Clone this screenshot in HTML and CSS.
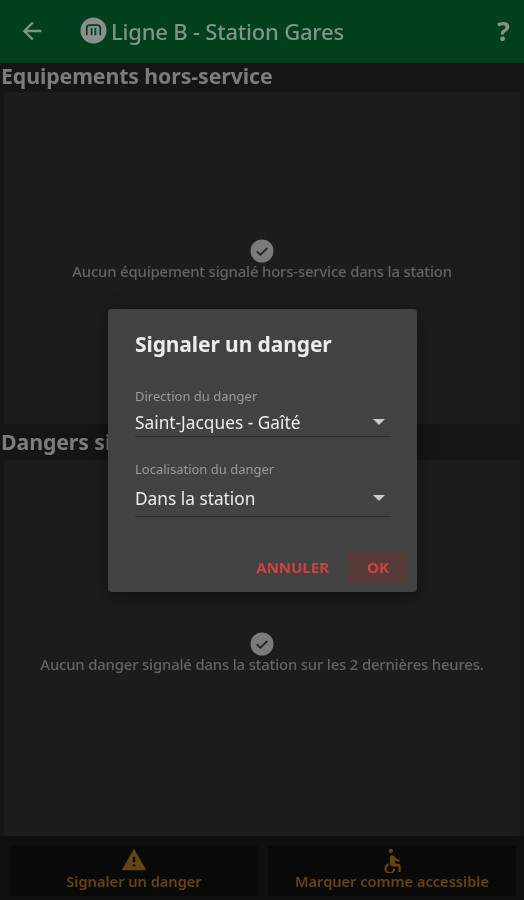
FILE: index.html
```html
<!DOCTYPE html>
<html lang="fr">
<head>
<meta charset="utf-8">
<title>Ligne B - Station Gares</title>
<link rel="stylesheet" href="styles.css">
</head>
<body>
<div class="app">
  <header class="topbar">
    <svg class="back" viewBox="0 0 24 24" width="28" height="28"><path d="M20 11H7.800l5.600-5.600L12 4l-8 8 8 8 1.400-1.400L7.800 13H20z"/></svg>
    <div class="title-wrap">
      <svg class="metro" viewBox="0 0 28 28" width="27" height="27"><circle cx="14" cy="14" r="13.500" class="metro-disc"/><path class="metro-m" d="M7 19V11.500c0-2 1.300-3 3-3h8c1.700 0 3 1 3 3V19M12 19v-7.500M16 19v-7.500"/></svg>
      <h1 class="title">Ligne B - Station Gares</h1>
    </div>
    <span class="help">?</span>
  </header>
  <main class="content">
    <h2 class="section-title">Equipements hors-service</h2>
    <section class="card card-top">
      <svg class="check" viewBox="0 0 24 24" width="24" height="24"><circle cx="12" cy="12" r="11.500" class="check-disc"/><path class="check-mark" d="M6.800 12.300l3.600 3.500 7-7"/></svg>
      <p class="empty">Aucun équipement signalé hors-service dans la station</p>
    </section>
    <h2 class="section-title section-second">Dangers signalés</h2>
    <section class="card card-bottom">
      <svg class="check" viewBox="0 0 24 24" width="24" height="24"><circle cx="12" cy="12" r="11.500" class="check-disc"/><path class="check-mark" d="M6.800 12.300l3.600 3.500 7-7"/></svg>
      <p class="empty">Aucun danger signalé dans la station sur les 2 dernières heures.</p>
    </section>
  </main>
  <footer class="actions">
    <button class="action">
      <svg viewBox="0 0 24 24" width="28" height="28"><path class="amber" d="M1 21.500h22L12 2.500z"/><path class="hole" d="M11 9.500h2v5h-2zM11 16.300h2v2h-2z"/></svg>
      <span>Signaler un danger</span>
    </button>
    <button class="action">
      <svg viewBox="0 0 24 24" width="26" height="26"><circle class="amber" cx="11" cy="3.500" r="2"/><path class="amber" d="M19 13.500v-2c-1.500 0-3-.8-4-1.900l-1.300-1.500c-.4-.4-1-.6-1.500-.6-1.200 0-2.200 1-2.200 2.200V15c0 1.700 1.300 3 3 3h5v5h2v-5.500c0-1.100-.9-2-2-2h-3v-3.400c1.300 1 2.700 1.400 4 1.400zM13 20a3 3 0 0 1-6 0c0-1.300.8-2.400 2-2.800v-2.100a5 5 0 1 0 6 4.900z"/></svg>
      <span>Marquer comme accessible</span>
    </button>
  </footer>
  <div class="dialog">
    <h3 class="dialog-title">Signaler un danger</h3>
    <div class="field field-first">
      <label class="field-label">Direction du danger</label>
      <div class="select"><span>Saint-Jacques - Gaîté</span><i class="caret"></i></div>
    </div>
    <div class="field field-second">
      <label class="field-label">Localisation du danger</label>
      <div class="select select-tall"><span>Dans la station</span><i class="caret"></i></div>
    </div>
    <div class="dialog-actions">
      <button class="text-btn">ANNULER</button>
      <button class="text-btn text-btn-on">OK</button>
    </div>
  </div>
</div>
</body>
</html>
```
FILE: styles.css
```css
* { box-sizing: border-box; }
html, body { margin: 0; padding: 0; }
body { background: #151515; font-family: "Noto Sans", "Open Sans", sans-serif; }
.app { position: relative; width: 524px; height: 900px; display: flex; flex-direction: column; overflow: hidden; background: #151515; filter: blur(0.6px); }

.topbar { flex: none; height: 63px; background: #00401d; display: flex; align-items: center; padding: 0 14px 2px 18px; }
.back { fill: #84928a; flex: none; }
.title-wrap { display: flex; align-items: center; gap: 4px; margin-left: 34px; flex: 1; }
.metro { flex: none; margin-top: -1px; }
.metro-disc { fill: #8a8f8b; }
.metro-m { fill: none; stroke: #00401d; stroke-width: 1.800; }
.title { margin: 0; font-size: 22px; line-height: 30px; font-weight: 500; color: #84928a; white-space: nowrap; letter-spacing: -0.2px; }
.help { font-size: 27px; line-height: 36px; font-weight: 700; color: #84928a; }

.content { flex: 1; display: flex; flex-direction: column; min-height: 0; }
.section-title { margin: 0; padding-left: 1px; height: 29px; line-height: 26px; font-size: 21.300px; font-weight: 700; color: #7c7c7c; white-space: nowrap; letter-spacing: -0.1px; }
.section-second { height: 36px; line-height: 36px; }
.card { margin: 0 4px; background: #1c1c1c; border-radius: 3px; display: flex; flex-direction: column; align-items: center; justify-content: center; }
.card-top { height: 332px; padding-top: 3px; }
.card-bottom { flex: 1; padding-top: 10px; }
.check { display: block; }
.check-disc { fill: #7a7a7a; }
.check-mark { fill: none; stroke: #202020; stroke-width: 1.800; }
.empty { margin: -2px 0 0; font-size: 14.850px; line-height: 20px; font-weight: 500; color: #646464; white-space: nowrap; letter-spacing: -0.15px; }

.actions { flex: none; height: 64px; display: flex; gap: 10px; padding: 10px 8px 4px 10px; background: #0f0f0f; }
.action { flex: 1; border: 0; background: #090909; color: #65440f; font: inherit; font-size: 14.600px; font-weight: 600; padding: 0 0 5px; display: flex; flex-direction: column; align-items: center; justify-content: flex-end; line-height: 19px; }
.action svg { display: block; margin-bottom: -1px; }
.amber { fill: #65440f; }
.hole { fill: #090909; }

.dialog { position: absolute; left: 108px; top: 309px; width: 309px; height: 283px; background: #424242; border-radius: 4px; box-shadow: 0 6px 20px rgba(0,0,0,.45); padding: 20px 26px 0 27px; }
.dialog-title { margin: 0; font-size: 21px; line-height: 30px; font-weight: 700; color: #ececec; letter-spacing: -0.1px; white-space: nowrap; }
.field-first { margin-top: 28px; }
.field-second { margin-top: 23px; }
.field-label { display: block; font-size: 13px; line-height: 18px; color: #9a9a9a; }
.select { display: flex; align-items: center; justify-content: space-between; height: 32px; padding: 3px 6px 0 0; border-bottom: 1px solid #2e2e2e; font-size: 17.300px; color: #ececec; }
.select-tall { height: 39px; padding-top: 2px; }
.caret { width: 0; height: 0; border-left: 6px solid transparent; border-right: 6px solid transparent; border-top: 6px solid #c8c8c8; }
.dialog-actions { position: absolute; right: 9px; bottom: 9px; display: flex; align-items: center; }
.text-btn { border: 0; background: transparent; color: #d0423a; font: inherit; font-size: 15px; font-weight: 700; height: 32px; padding: 0 19px 0 0; border-radius: 3px; }
.text-btn-on { background: #573b39; width: 60px; padding: 0; }
```
